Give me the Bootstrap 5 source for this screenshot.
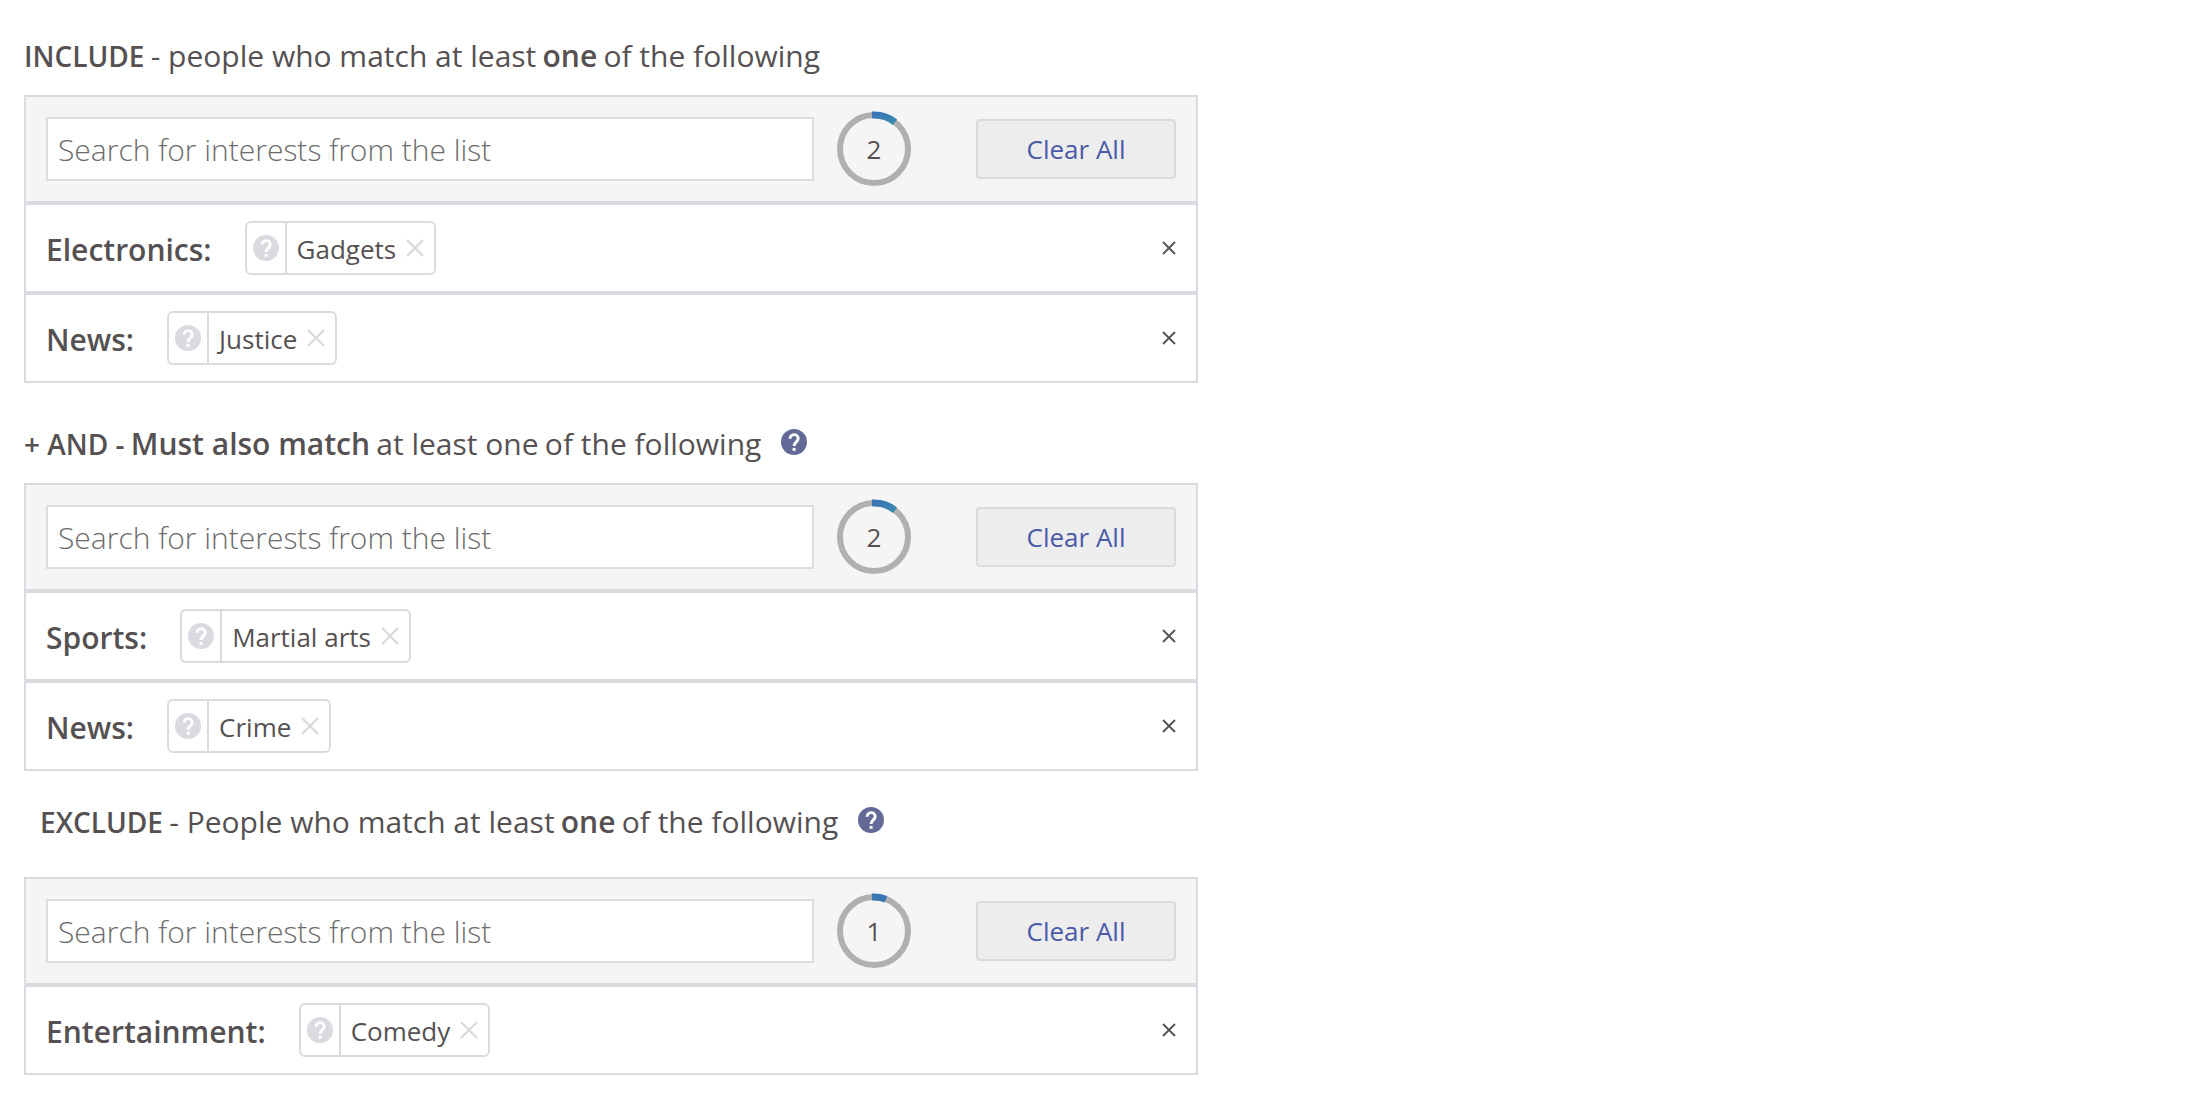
<!DOCTYPE html>
<html lang="en">
<head>
<meta charset="utf-8">
<meta name="viewport" content="width=device-width, initial-scale=1">
<title>Audience interests</title>
<link href="https://cdn.jsdelivr.net/npm/bootstrap@5.3.0/dist/css/bootstrap.min.css" rel="stylesheet">
<style>
  body { font-family: "Open Sans", sans-serif; font-size: 30px; line-height: 44px; color: #555152; background: #fff; }
  .audience { max-width: 1222px; padding: 36px 24px 40px; }
  .group-title { font-size: 24px; line-height: 44px; font-weight: 400; margin: 0 0 15px; }
  .group-title strong { font-weight: 600; }
  .group-title .phrase { font-size: 30px; line-height: 1; }
  .group-title .keyword { font-size: 28px; line-height: 1; }
  .group + .group { margin-top: 41px; }
  .group + .group-exclude { margin-top: 31px; }
  .group-exclude .group-title { margin-bottom: 31px; padding-left: 16px; }
  .panel { border: 2px solid #dadae0; }
  .panel-head { height: 104px; padding: 0 20px; background: #f5f5f5; }
  .panel-line { height: 90px; padding: 0 20px; border-top: 4px solid #dadae0; }
  .search.form-control { height: 64px; padding: 0 10px; border: 2px solid #dedede; border-radius: 0; font-size: 30px; font-weight: 300; color: #555152; }
  .search::placeholder { color: #6c6c6c; opacity: 1; }
  .counter { width: 76px; height: 76px; margin: 0 64px 0 22px; font-size: 26px; }
  .counter svg { width: 76px; height: 76px; }
  .clear.btn { width: 200px; height: 60px; padding: 0; border: 2px solid #dadae0; border-radius: 4px; background: #ededed; color: #4a5aa8; font-size: 26px; line-height: 40px; }
  .category { font-weight: 600; margin-right: 33px; padding-top: 4px; }
  .chip { height: 54px; border: 2px solid #dadae0; border-radius: 6px; font-size: 26px; }
  .chip-help { width: 40px; color: #dadae0; border-right: 2px solid #dadae0 !important; }
  .chip-name { padding: 2px 10px 0; }
  .plain { background: none; border: 0; padding: 0; line-height: 1; }
  .chip-remove { color: #d9d9d9; margin-right: 10px; }
  .line-remove { color: #555152; }
  .title-help { color: #636a98; margin-left: 20px; padding-top: 5px; }
  svg { display: block; }
</style>
</head>
<body>
<svg width="0" height="0" class="position-absolute" aria-hidden="true">
  <defs>
    <linearGradient id="arc" x1="0" x2="1" y1="0" y2="1">
      <stop offset="0" stop-color="#3a74b4"/><stop offset="1" stop-color="#3a8bb2"/>
    </linearGradient>
    <symbol id="help" viewBox="0 0 26 26">
      <circle cx="13" cy="13" r="13" fill="currentColor"/>
      <path d="M9.100 9.700C9.100 7.200 10.800 5.600 13.100 5.600s4.100 1.600 4.100 3.900c0 3.200-4.100 3.700-4.100 7.400" fill="none" stroke="#fff" stroke-width="2.900"/>
      <rect x="11.600" y="18.900" width="3" height="2.900" fill="#fff"/>
    </symbol>
    <symbol id="cross-lg" viewBox="0 0 18 18"><path d="M1 1l16 16M17 1L1 17" stroke="currentColor" stroke-width="2.200" fill="none"/></symbol>
    <symbol id="cross-sm" viewBox="0 0 14 14"><path d="M1 1l12 12M13 1L1 13" stroke="currentColor" stroke-width="1.800" fill="none"/></symbol>
  </defs>
</svg>

<main class="audience">
  <section class="group">
    <h2 class="group-title"><strong class="keyword">INCLUDE</strong> <span class="phrase">- people who match at least</span> <strong class="phrase">one</strong> <span class="phrase">of the following</span></h2>
    <div class="panel">
      <div class="panel-head d-flex align-items-center">
        <input type="text" class="form-control search flex-fill shadow-none" placeholder="Search for interests from the list" aria-label="Included interests">
        <div class="counter position-relative d-flex align-items-center justify-content-center flex-shrink-0">
          <svg class="position-absolute top-0 start-0" viewBox="0 0 76 76"><circle cx="38" cy="38" r="34" fill="none" stroke="#b0b0b0" stroke-width="6"/><path d="M36 4.100A34 34 0 0 1 59 11.200" fill="none" stroke="url(#arc)" stroke-width="7"/></svg>
          <span>2</span>
        </div>
        <button type="button" class="btn clear flex-shrink-0">Clear All</button>
      </div>
      <div class="panel-line d-flex align-items-center">
        <span class="category">Electronics:</span>
        <div class="chip d-flex align-items-center">
          <button type="button" class="plain chip-help h-100 d-flex align-items-center justify-content-center" aria-label="About Gadgets"><svg width="26" height="26"><use href="#help"/></svg></button>
          <span class="chip-name">Gadgets</span>
          <button type="button" class="plain chip-remove" aria-label="Remove Gadgets"><svg width="18" height="18"><use href="#cross-lg"/></svg></button>
        </div>
        <button type="button" class="plain line-remove ms-auto" aria-label="Remove Electronics"><svg width="14" height="14"><use href="#cross-sm"/></svg></button>
      </div>
      <div class="panel-line d-flex align-items-center">
        <span class="category">News:</span>
        <div class="chip d-flex align-items-center">
          <button type="button" class="plain chip-help h-100 d-flex align-items-center justify-content-center" aria-label="About Justice"><svg width="26" height="26"><use href="#help"/></svg></button>
          <span class="chip-name">Justice</span>
          <button type="button" class="plain chip-remove" aria-label="Remove Justice"><svg width="18" height="18"><use href="#cross-lg"/></svg></button>
        </div>
        <button type="button" class="plain line-remove ms-auto" aria-label="Remove News"><svg width="14" height="14"><use href="#cross-sm"/></svg></button>
      </div>
    </div>
  </section>

  <section class="group">
    <div class="d-flex">
      <h2 class="group-title"><strong class="keyword">+ AND -</strong> <strong class="phrase">Must also match</strong> <span class="phrase">at least one</span> <span class="phrase">of the following</span></h2>
      <button type="button" class="plain title-help align-self-start" aria-label="About the AND group"><svg width="26" height="26"><use href="#help"/></svg></button>
    </div>
    <div class="panel">
      <div class="panel-head d-flex align-items-center">
        <input type="text" class="form-control search flex-fill shadow-none" placeholder="Search for interests from the list" aria-label="Interests that must also match">
        <div class="counter position-relative d-flex align-items-center justify-content-center flex-shrink-0">
          <svg class="position-absolute top-0 start-0" viewBox="0 0 76 76"><circle cx="38" cy="38" r="34" fill="none" stroke="#b0b0b0" stroke-width="6"/><path d="M36 4.100A34 34 0 0 1 59 11.200" fill="none" stroke="url(#arc)" stroke-width="7"/></svg>
          <span>2</span>
        </div>
        <button type="button" class="btn clear flex-shrink-0">Clear All</button>
      </div>
      <div class="panel-line d-flex align-items-center">
        <span class="category">Sports:</span>
        <div class="chip d-flex align-items-center">
          <button type="button" class="plain chip-help h-100 d-flex align-items-center justify-content-center" aria-label="About Martial arts"><svg width="26" height="26"><use href="#help"/></svg></button>
          <span class="chip-name">Martial arts</span>
          <button type="button" class="plain chip-remove" aria-label="Remove Martial arts"><svg width="18" height="18"><use href="#cross-lg"/></svg></button>
        </div>
        <button type="button" class="plain line-remove ms-auto" aria-label="Remove Sports"><svg width="14" height="14"><use href="#cross-sm"/></svg></button>
      </div>
      <div class="panel-line d-flex align-items-center">
        <span class="category">News:</span>
        <div class="chip d-flex align-items-center">
          <button type="button" class="plain chip-help h-100 d-flex align-items-center justify-content-center" aria-label="About Crime"><svg width="26" height="26"><use href="#help"/></svg></button>
          <span class="chip-name">Crime</span>
          <button type="button" class="plain chip-remove" aria-label="Remove Crime"><svg width="18" height="18"><use href="#cross-lg"/></svg></button>
        </div>
        <button type="button" class="plain line-remove ms-auto" aria-label="Remove News"><svg width="14" height="14"><use href="#cross-sm"/></svg></button>
      </div>
    </div>
  </section>

  <section class="group group-exclude">
    <div class="d-flex">
      <h2 class="group-title"><strong class="keyword">EXCLUDE</strong> <span class="phrase">- People who match at least</span> <strong class="phrase">one</strong> <span class="phrase">of the following</span></h2>
      <button type="button" class="plain title-help align-self-start" aria-label="About the exclude group"><svg width="26" height="26"><use href="#help"/></svg></button>
    </div>
    <div class="panel">
      <div class="panel-head d-flex align-items-center">
        <input type="text" class="form-control search flex-fill shadow-none" placeholder="Search for interests from the list" aria-label="Excluded interests">
        <div class="counter position-relative d-flex align-items-center justify-content-center flex-shrink-0">
          <svg class="position-absolute top-0 start-0" viewBox="0 0 76 76"><circle cx="38" cy="38" r="34" fill="none" stroke="#b0b0b0" stroke-width="6"/><path d="M36 4.100A34 34 0 0 1 50 6.200" fill="none" stroke="#3a78b4" stroke-width="7"/></svg>
          <span>1</span>
        </div>
        <button type="button" class="btn clear flex-shrink-0">Clear All</button>
      </div>
      <div class="panel-line d-flex align-items-center">
        <span class="category">Entertainment:</span>
        <div class="chip d-flex align-items-center">
          <button type="button" class="plain chip-help h-100 d-flex align-items-center justify-content-center" aria-label="About Comedy"><svg width="26" height="26"><use href="#help"/></svg></button>
          <span class="chip-name">Comedy</span>
          <button type="button" class="plain chip-remove" aria-label="Remove Comedy"><svg width="18" height="18"><use href="#cross-lg"/></svg></button>
        </div>
        <button type="button" class="plain line-remove ms-auto" aria-label="Remove Entertainment"><svg width="14" height="14"><use href="#cross-sm"/></svg></button>
      </div>
    </div>
  </section>
</main>
<script src="https://cdn.jsdelivr.net/npm/bootstrap@5.3.0/dist/js/bootstrap.bundle.min.js"></script>
</body>
</html>
